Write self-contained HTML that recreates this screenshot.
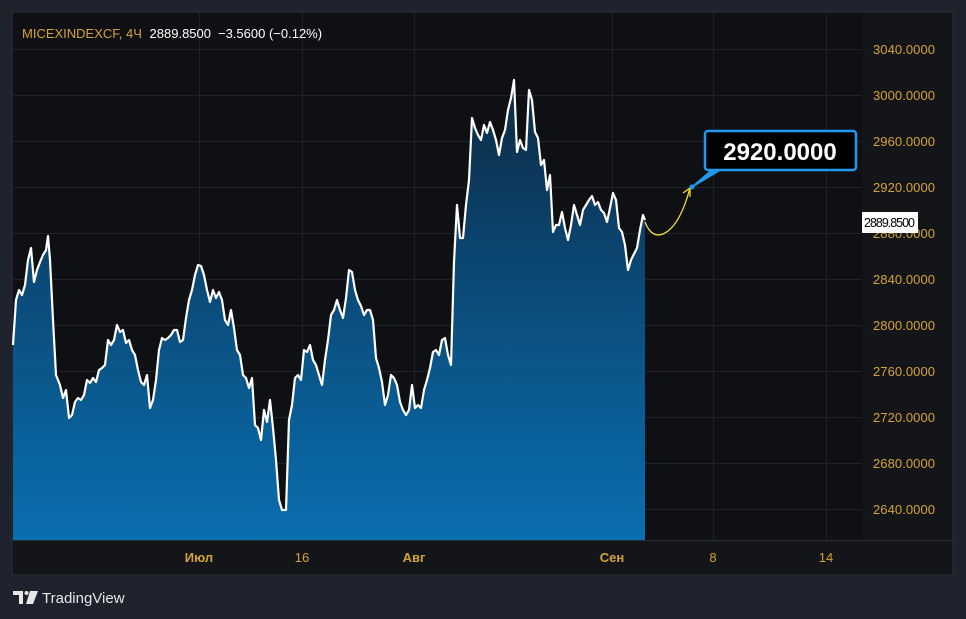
<!DOCTYPE html>
<html><head><meta charset="utf-8"><style>
body{margin:0;width:966px;height:619px;background:#1e222d;overflow:hidden;font-family:"Liberation Sans",sans-serif;}
</style></head><body>
<svg width="966" height="619" xmlns="http://www.w3.org/2000/svg" style="position:absolute;left:0;top:0">
<defs>
<linearGradient id="g" x1="0" y1="0" x2="0" y2="1">
<stop offset="0" stop-color="#0d2a42"/><stop offset="0.45" stop-color="#0b4a78"/><stop offset="1" stop-color="#0a6fb0"/>
</linearGradient>
</defs>
<rect x="12" y="12" width="941" height="563" fill="#131519" stroke="#2a2e39" stroke-width="1"/>
<rect x="13" y="13" width="849" height="527" fill="#0f1013"/>
<g stroke="#1f2229" stroke-width="1">
<line x1="199.5" y1="13" x2="199.5" y2="540"/><line x1="302.5" y1="13" x2="302.5" y2="540"/><line x1="414.5" y1="13" x2="414.5" y2="540"/><line x1="612.5" y1="13" x2="612.5" y2="540"/><line x1="713.5" y1="13" x2="713.5" y2="540"/><line x1="826.5" y1="13" x2="826.5" y2="540"/>
<line x1="13" y1="49.5" x2="862" y2="49.5"/><line x1="13" y1="95.5" x2="862" y2="95.5"/><line x1="13" y1="141.5" x2="862" y2="141.5"/><line x1="13" y1="187.5" x2="862" y2="187.5"/><line x1="13" y1="233.5" x2="862" y2="233.5"/><line x1="13" y1="279.5" x2="862" y2="279.5"/><line x1="13" y1="325.5" x2="862" y2="325.5"/><line x1="13" y1="371.5" x2="862" y2="371.5"/><line x1="13" y1="417.5" x2="862" y2="417.5"/><line x1="13" y1="463.5" x2="862" y2="463.5"/><line x1="13" y1="509.5" x2="862" y2="509.5"/>
</g>
<line x1="13" y1="540.5" x2="953" y2="540.5" stroke="#2a2e39"/>
<path d="M13,345 L16,300 19,290 22,295 25,285 28,260 31,248 34,282 37,270 40,262 43,255 46,250 48,236 50,260 53,320 56,375 60,385 63,398 66,390 69,418 72,415 75,402 78,398 81,400 84,395 87,380 90,383 93,378 96,382 99,370 102,368 105,365 108,340 111,345 114,340 117,325 120,332 123,330 126,343 129,340 132,350 135,355 138,370 141,382 144,385 147,375 150,408 153,400 156,380 159,350 162,338 165,340 168,338 171,335 174,330 177,330 180,342 183,340 186,318 189,300 192,290 195,275 198,265 201,266 204,275 207,290 210,302 213,290 216,298 219,292 222,300 225,320 228,325 231,310 234,328 237,350 240,355 243,375 246,378 249,388 252,378 255,425 258,428 261,440 264,410 267,422 270,400 273,428 276,460 279,500 282,510 286,510 289,420 292,405 295,378 298,375 301,380 304,350 307,352 310,345 313,360 316,365 319,375 322,385 325,360 328,340 331,315 334,310 337,300 340,310 343,318 346,298 349,270 352,272 355,290 358,300 361,306 364,315 367,310 370,310 373,320 376,358 379,368 382,382 385,405 388,395 391,375 394,378 397,385 400,402 403,410 406,415 409,410 412,385 415,408 418,405 421,408 424,390 427,380 430,368 433,352 436,350 439,355 442,340 445,338 448,355 451,365 454,262 457,205 460,238 463,238 466,205 469,180 472,118 475,128 478,135 481,140 484,125 487,133 490,122 493,130 496,140 499,155 502,138 505,130 508,110 511,98 514,80 517,152 520,140 523,148 526,150 529,90 532,100 535,132 538,138 541,165 544,160 547,190 550,175 553,232 556,225 559,225 562,212 565,228 568,240 571,225 574,205 577,215 580,225 583,210 586,205 589,200 592,196 595,205 598,202 601,210 604,213 607,222 610,208 613,193 616,200 619,228 622,232 625,245 628,270 631,260 634,254 637,248 640,230 643,215 645,220 L645,540 L13,540 Z" fill="url(#g)"/>
<path d="M13,345 L16,300 19,290 22,295 25,285 28,260 31,248 34,282 37,270 40,262 43,255 46,250 48,236 50,260 53,320 56,375 60,385 63,398 66,390 69,418 72,415 75,402 78,398 81,400 84,395 87,380 90,383 93,378 96,382 99,370 102,368 105,365 108,340 111,345 114,340 117,325 120,332 123,330 126,343 129,340 132,350 135,355 138,370 141,382 144,385 147,375 150,408 153,400 156,380 159,350 162,338 165,340 168,338 171,335 174,330 177,330 180,342 183,340 186,318 189,300 192,290 195,275 198,265 201,266 204,275 207,290 210,302 213,290 216,298 219,292 222,300 225,320 228,325 231,310 234,328 237,350 240,355 243,375 246,378 249,388 252,378 255,425 258,428 261,440 264,410 267,422 270,400 273,428 276,460 279,500 282,510 286,510 289,420 292,405 295,378 298,375 301,380 304,350 307,352 310,345 313,360 316,365 319,375 322,385 325,360 328,340 331,315 334,310 337,300 340,310 343,318 346,298 349,270 352,272 355,290 358,300 361,306 364,315 367,310 370,310 373,320 376,358 379,368 382,382 385,405 388,395 391,375 394,378 397,385 400,402 403,410 406,415 409,410 412,385 415,408 418,405 421,408 424,390 427,380 430,368 433,352 436,350 439,355 442,340 445,338 448,355 451,365 454,262 457,205 460,238 463,238 466,205 469,180 472,118 475,128 478,135 481,140 484,125 487,133 490,122 493,130 496,140 499,155 502,138 505,130 508,110 511,98 514,80 517,152 520,140 523,148 526,150 529,90 532,100 535,132 538,138 541,165 544,160 547,190 550,175 553,232 556,225 559,225 562,212 565,228 568,240 571,225 574,205 577,215 580,225 583,210 586,205 589,200 592,196 595,205 598,202 601,210 604,213 607,222 610,208 613,193 616,200 619,228 622,232 625,245 628,270 631,260 634,254 637,248 640,230 643,215 645,220" fill="none" stroke="#fff" stroke-width="2.2" stroke-linejoin="round"/>
<path d="M645,222 Q652,240 665,233 Q680,225 690,188" fill="none" stroke="#f5e02a" stroke-width="1.3"/>
<path d="M683,193 L690,188 L690,197" fill="none" stroke="#f5e02a" stroke-width="1.3"/>
<path d="M692,187 L713,169 L722,169 Z" fill="#1e9bf0" stroke="#1e9bf0" stroke-width="1.5"/>
<circle cx="692" cy="187" r="2.5" fill="#1e9bf0"/>
<rect x="705" y="131" width="151" height="39" rx="3" fill="#000" stroke="#1e9bf0" stroke-width="2.5"/>
<text x="780" y="160" fill="#fff" font-size="24" font-weight="bold" text-anchor="middle">2920.0000</text>
<g fill="#d5a238" font-size="13">
<text x="873" y="54" textLength="62">3040.0000</text><text x="873" y="100" textLength="62">3000.0000</text><text x="873" y="146" textLength="62">2960.0000</text><text x="873" y="192" textLength="62">2920.0000</text><text x="873" y="238" textLength="62">2880.0000</text><text x="873" y="284" textLength="62">2840.0000</text><text x="873" y="330" textLength="62">2800.0000</text><text x="873" y="376" textLength="62">2760.0000</text><text x="873" y="422" textLength="62">2720.0000</text><text x="873" y="468" textLength="62">2680.0000</text><text x="873" y="514" textLength="62">2640.0000</text>
</g>
<rect x="862" y="212" width="56" height="21" fill="#fff"/>
<text x="864" y="227" fill="#000" font-size="12.5" textLength="51">2889.8500</text>
<g fill="#d5a238" font-size="13" text-anchor="middle">
<text x="199" y="562" font-weight="bold">Июл</text><text x="302" y="562">16</text><text x="414" y="562" font-weight="bold">Авг</text><text x="612" y="562" font-weight="bold">Сен</text><text x="713" y="562">8</text><text x="826" y="562">14</text>
</g>
<text x="22" y="38" font-size="13" fill="#d5a238">MICEXINDEXCF, 4Ч <tspan fill="#fff" dx="4">2889.8500</tspan><tspan fill="#fff" dx="7">−3.5600 (−0.12%)</tspan></text>
<path d="M13,591 h10 v13 h-4 v-9 h-6 Z" fill="#e6e6e6"/>
<circle cx="26.5" cy="593" r="2" fill="#e6e6e6"/>
<path d="M30,591 h8 l-5,13 h-7 Z" fill="#e6e6e6"/>
<text x="42" y="603" font-size="15" fill="#e6e6e6">TradingView</text>
</svg>
</body></html>
